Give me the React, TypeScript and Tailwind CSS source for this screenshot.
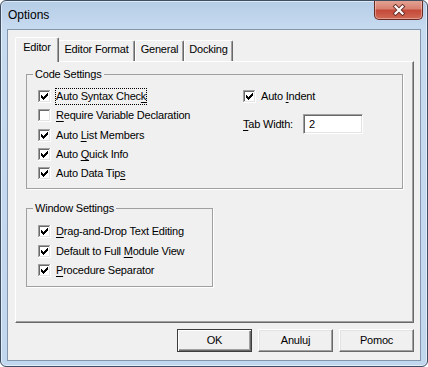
import React from "react";

const font = "font-['Liberation_Sans',Arial,sans-serif]";

function CheckBox({ checked }: { checked: boolean }) {
  const cols: [number, number][] = [
    [3, 5],
    [4, 6],
    [5, 7],
    [6, 6],
    [7, 5],
    [8, 4],
    [9, 3],
  ];
  return (
    <svg width="13" height="13" viewBox="0 0 13 13" shapeRendering="crispEdges" className="block shrink-0">
      <rect x="0" y="0" width="13" height="13" fill="#fff" />
      <rect x="0" y="0" width="12" height="1" fill="#a0a0a0" />
      <rect x="0" y="0" width="1" height="12" fill="#a0a0a0" />
      <rect x="1" y="1" width="10" height="1" fill="#696969" />
      <rect x="1" y="1" width="1" height="10" fill="#696969" />
      <rect x="1" y="11" width="11" height="1" fill="#e3e3e3" />
      <rect x="11" y="1" width="1" height="11" fill="#e3e3e3" />
      <rect x="0" y="12" width="13" height="1" fill="#fff" />
      <rect x="12" y="0" width="1" height="13" fill="#fff" />
      {checked &&
        cols.map(([x, y]) => <rect key={x} x={x} y={y} width="1" height="3" fill="#000" />)}
    </svg>
  );
}

function U({ children }: { children: React.ReactNode }) {
  return <span className="underline decoration-1 underline-offset-[2px]">{children}</span>;
}

function Row({
  checked,
  h,
  focus,
  children,
}: {
  checked: boolean;
  h: string;
  focus?: boolean;
  children: React.ReactNode;
}) {
  return (
    <div className={`flex items-center ${h}`}>
      <CheckBox checked={checked} />
      <span
        className={`ml-[4px] border border-dotted py-[1px] whitespace-nowrap ${
          focus ? "border-black" : "border-transparent"
        }`}
      >
        {children}
      </span>
    </div>
  );
}

function Button({ children, def }: { children: React.ReactNode; def?: boolean }) {
  return (
    <div
      className={`w-[75px] h-[23px] flex items-center justify-center ${
        def
          ? "border border-[#3c3c3c] shadow-[inset_1px_1px_0_#fff,inset_-1px_-1px_0_#696969,inset_-2px_-2px_0_#a0a0a0]"
          : "border border-t-white border-l-white border-r-[#696969] border-b-[#696969] shadow-[inset_-1px_-1px_0_#a0a0a0,inset_1px_1px_0_#e3e3e3]"
      }`}
    >
      {children}
    </div>
  );
}

export default function App() {
  return (
    <div
      className={`relative w-[428px] h-[367px] overflow-hidden rounded-[6px] border border-[#3e4f63] bg-[linear-gradient(180deg,#b5cde6_0px,#c7dbf0_28px,#c1d7ee_100%)] shadow-[inset_0_0_0_1px_rgba(255,255,255,0.55)] text-[11px] leading-[13px] tracking-[-0.2px] text-black ${font}`}
    >
      {/* title bar */}
      <div className="h-[28px] flex items-center pl-[7px] text-[12px] tracking-normal">Options</div>
      <div className="absolute top-[-1px] right-[4px] w-[49px] h-[20px] rounded-b-[5px] border border-t-0 border-[#6a2a24] bg-[linear-gradient(180deg,#e3a596_0%,#d98272_45%,#c44a39_55%,#cf6a55_100%)] shadow-[inset_0_0_0_1px_rgba(255,220,210,0.45)] flex items-center justify-center">
        <svg width="14" height="12" viewBox="0 0 14 12">
          <path d="M3.5 2.5 L10.5 9.5 M10.5 2.5 L3.5 9.5" stroke="#6a2e28" strokeWidth="4" strokeLinecap="square" />
          <path d="M3.5 2.5 L10.5 9.5 M10.5 2.5 L3.5 9.5" stroke="#fff" strokeWidth="2.2" strokeLinecap="square" />
        </svg>
      </div>

      {/* client area */}
      <div className="ml-[6px] w-[414px] h-[332px] border border-[#8396ab] bg-[#f0f0f0]">
        {/* tabs */}
        <div className="ml-[7px] mt-[7px] h-[24px] flex items-end">
          <div className="relative z-10 -mb-[1px] w-[44px] h-[25px] bg-[#f0f0f0] border-l border-t border-r border-l-white border-t-white border-r-[#696969] rounded-t-[2px] shadow-[inset_-1px_0_0_#a0a0a0] pt-[3px] text-center">
            Editor
          </div>
          <div className="w-[76px] h-[21px] border-t border-r border-t-white border-r-[#696969] rounded-tr-[2px] shadow-[inset_-1px_0_0_#a0a0a0] pt-[2px] text-center">
            Editor Format
          </div>
          <div className="w-[49px] h-[21px] border-t border-r border-l border-l-white border-t-white border-r-[#696969] rounded-t-[2px] shadow-[inset_-1px_0_0_#a0a0a0] pt-[2px] text-center">
            General
          </div>
          <div className="w-[49px] h-[21px] border-t border-r border-l border-l-white border-t-white border-r-[#696969] rounded-t-[2px] shadow-[inset_-1px_0_0_#a0a0a0] pt-[2px] text-center">
            Docking
          </div>
        </div>

        {/* panel */}
        <div className="ml-[7px] w-[399px] h-[262px] border border-t-white border-l-white border-r-[#696969] border-b-[#696969] shadow-[inset_-1px_-1px_0_#a0a0a0]">
          <fieldset className="ml-[10px] mt-[6px] w-[377px] h-[121px] border border-[#a0a0a0] shadow-[1px_1px_0_#fff]">
            <legend className="ml-[6px] px-[2px] leading-[13px]">Code Settings</legend>
            <div className="flex pl-[11px] pt-[6px]">
              <div className="w-[205px]">
                <Row checked h="h-[19px]" focus>
                  Auto Syntax Chec<U>k</U>
                </Row>
                <Row checked={false} h="h-[19px]">
                  <U>R</U>equire Variable Declaration
                </Row>
                <Row checked h="h-[20px]">
                  Auto <U>L</U>ist Members
                </Row>
                <Row checked h="h-[19px]">
                  Auto <U>Q</U>uick Info
                </Row>
                <Row checked h="h-[19px]">
                  Auto Data Tip<U>s</U>
                </Row>
              </div>
              <div>
                <Row checked h="h-[19px]">
                  Auto <U>I</U>ndent
                </Row>
                <div className="mt-[8px] h-[20px] flex items-center">
                  <span className="w-[60px] whitespace-nowrap">
                    <U>T</U>ab Width:
                  </span>
                  <div className="w-[60px] h-[20px] bg-white border border-t-[#a0a0a0] border-l-[#a0a0a0] border-r-white border-b-white shadow-[inset_1px_1px_0_#696969,inset_-1px_-1px_0_#e3e3e3] pl-[5px] flex items-center">
                    2
                  </div>
                </div>
              </div>
            </div>
          </fieldset>

          <fieldset className="ml-[10px] mt-[13px] w-[187px] h-[85px] border border-[#a0a0a0] shadow-[1px_1px_0_#fff]">
            <legend className="ml-[6px] px-[2px] leading-[13px]">Window Settings</legend>
            <div className="pl-[11px] pt-[6px]">
              <Row checked h="h-[20px]">
                <U>D</U>rag-and-Drop Text Editing
              </Row>
              <Row checked h="h-[20px]">
                Default to Full <U>M</U>odule View
              </Row>
              <Row checked h="h-[19px]">
                <U>P</U>rocedure Separator
              </Row>
            </div>
          </fieldset>
        </div>

        {/* buttons */}
        <div className="mt-[6px] pr-[6px] flex justify-end gap-[6px]">
          <Button def>OK</Button>
          <Button>Anuluj</Button>
          <Button>Pomoc</Button>
        </div>
      </div>
    </div>
  );
}
